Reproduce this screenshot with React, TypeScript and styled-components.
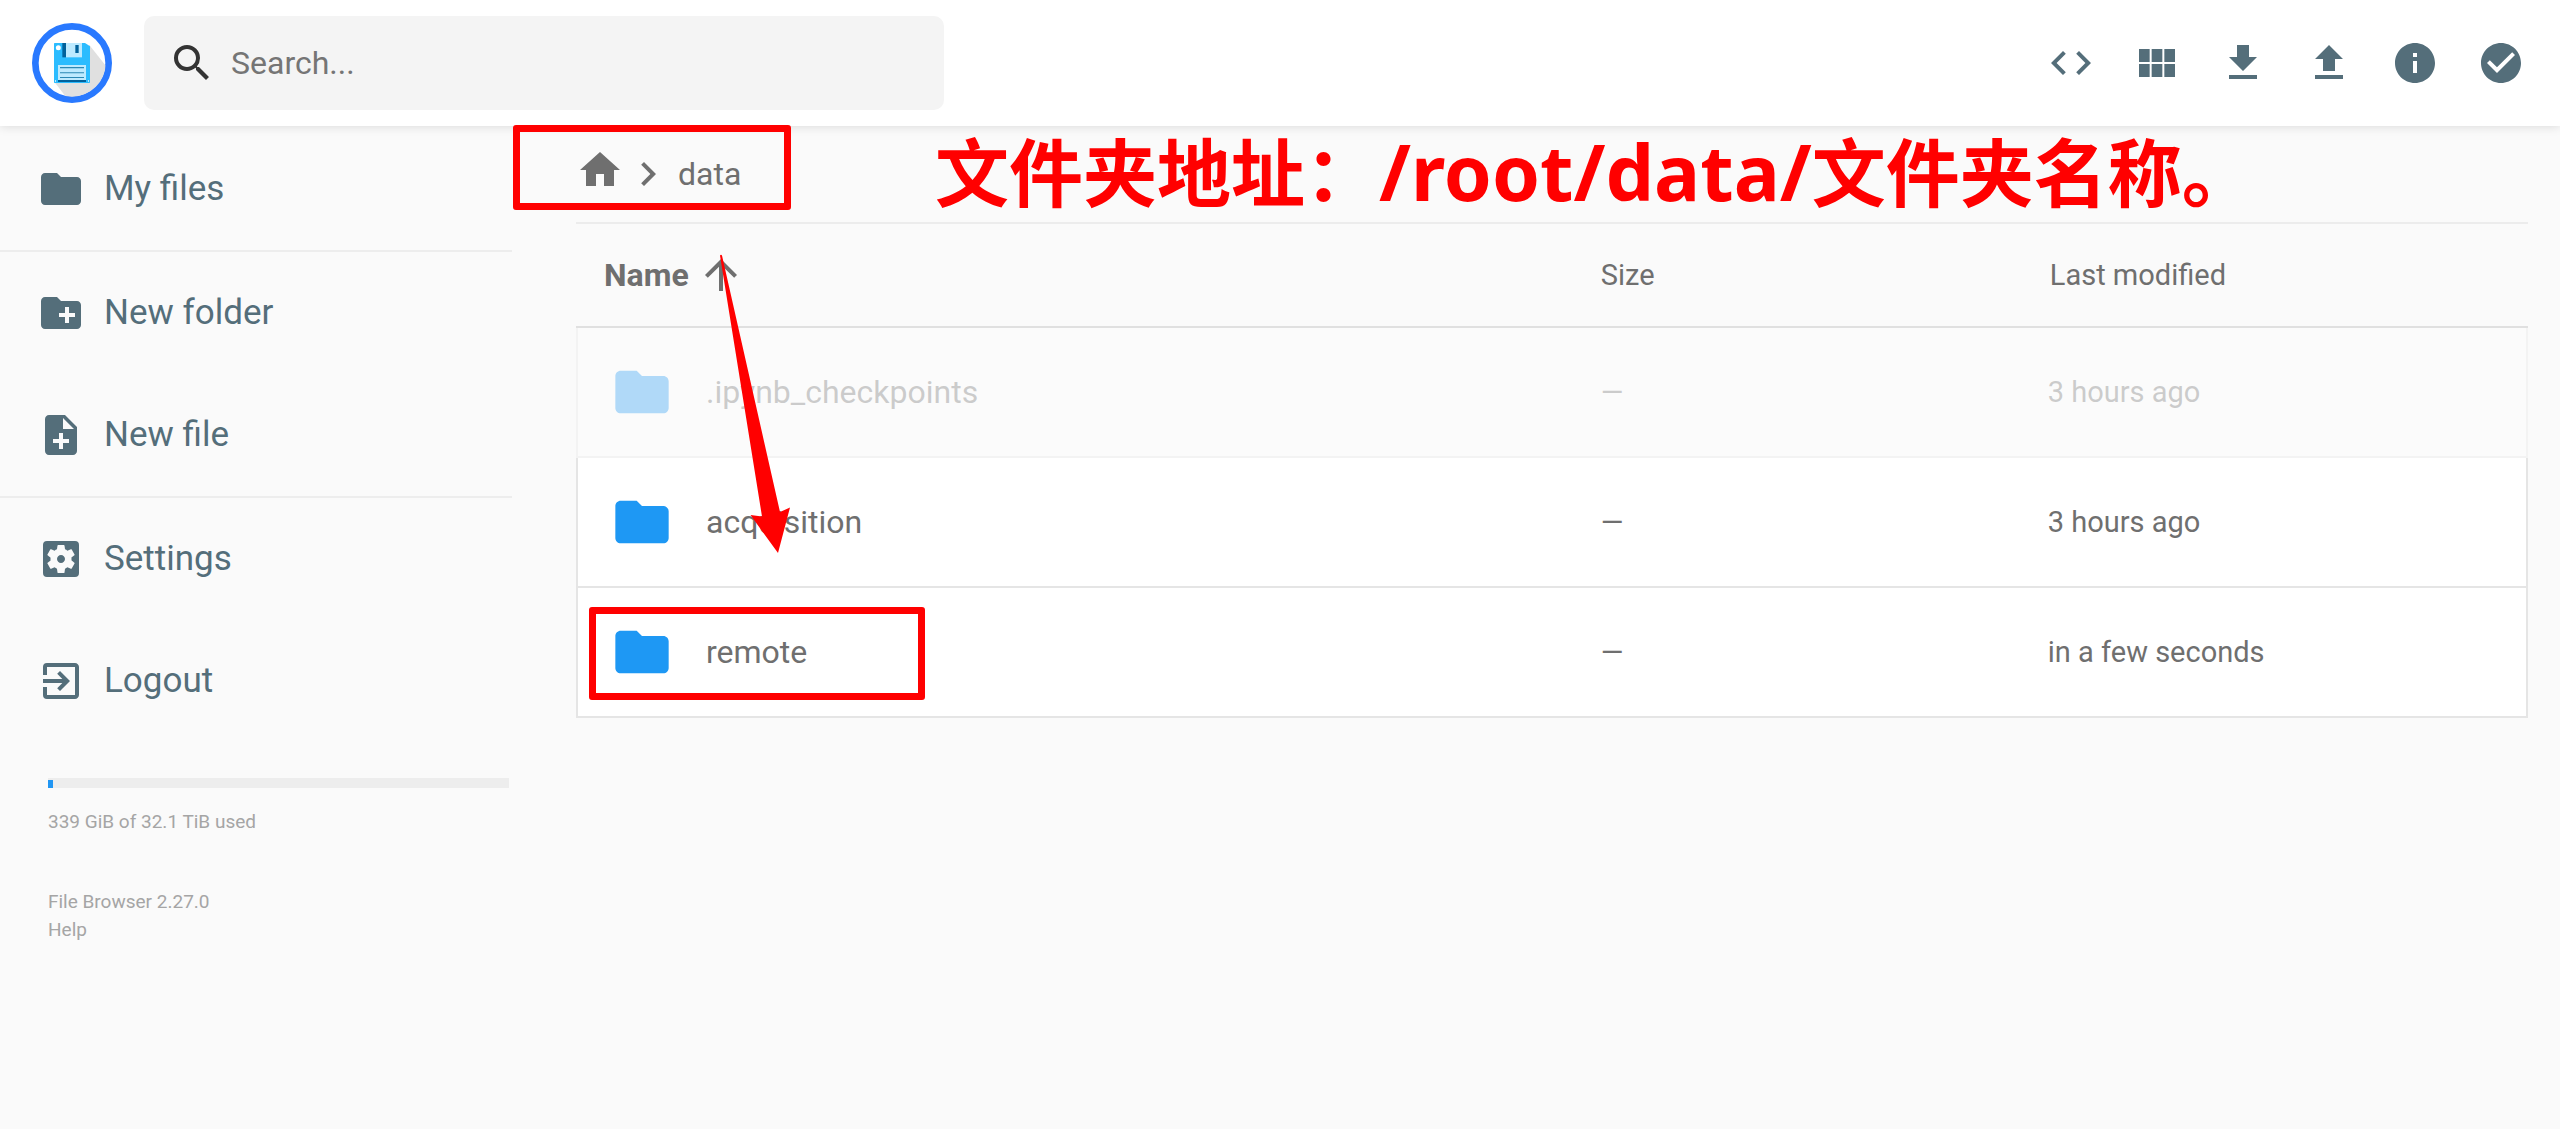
import React from "react";
import styled, { createGlobalStyle } from "styled-components";
import type { IconType } from "react-icons";
import {
  MdArrowUpward,
  MdCheckCircle,
  MdChevronRight,
  MdCode,
  MdCreateNewFolder,
  MdExitToApp,
  MdFileDownload,
  MdFileUpload,
  MdFolder,
  MdHome,
  MdInfo,
  MdNoteAdd,
  MdSearch,
  MdSettingsApplications,
  MdViewModule,
} from "react-icons/md";

const slate = "#546e7a";
const gray = "#6f6f6f";
const red = "#ff0000";

const GlobalStyle = createGlobalStyle`
  * { box-sizing: border-box; }
  body {
    margin: 0;
    background: #fafafa;
    color: ${gray};
    font: 32px/38px Roboto, "Liberation Sans", sans-serif;
  }
  button, input { font: inherit; color: inherit; }
  button { margin: 0; padding: 0; border: 0; background: none; cursor: pointer; }
  a { color: inherit; text-decoration: none; }
`;

const Header = styled.header`
  position: relative;
  display: flex;
  align-items: center;
  padding: 16px;
  background: #fff;
  box-shadow: 0 0 10px rgba(0, 0, 0, 0.15);
`;

const LogoLink = styled.a`
  display: flex;
  margin: 0 32px 0 16px;
  svg { width: 80px; height: 80px; }
`;

const SearchBox = styled.label`
  display: flex;
  align-items: center;
  gap: 15px;
  width: 800px;
  height: 94px;
  padding: 0 24px;
  border-radius: 10px;
  background: #f4f4f4;
  color: #333;
`;

const SearchInput = styled.input`
  flex: 1;
  min-width: 0;
  padding: 0;
  border: 0;
  outline: 0;
  background: none;
  &::placeholder { color: #757575; opacity: 1; }
`;

const Toolbar = styled.div`
  display: flex;
  margin-left: auto;
  color: ${slate};
`;

const ToolButton = styled.button`
  display: flex;
  padding: 19px;
`;

const Layout = styled.div`
  display: flex;
  align-items: flex-start;
`;

const Sidebar = styled.nav`
  flex: none;
  width: 20%;
  padding-top: 2px;
`;

const NavGroup = styled.div`
  & + & { border-top: 2px solid #ededed; }
`;

const NavButton = styled.button`
  display: flex;
  align-items: center;
  gap: 19px;
  width: 100%;
  height: 122px;
  padding: 0 37px;
  color: ${slate};
  font-size: 35px;
  line-height: 42px;
`;

const Credits = styled.div`
  margin: 36px 3px 0 48px;
  color: #a5a5a5;
  font-size: 19px;
  line-height: 28px;
`;

const Meter = styled.div`
  height: 10px;
  margin-bottom: 20px;
  padding-top: 2px;
  background: #ededed;
`;

const MeterFill = styled.div`
  height: 8px;
  background: #2196f3;
`;

const Version = styled.div`
  display: flex;
  flex-direction: column;
  align-items: flex-start;
  margin-top: 52px;
`;

const Main = styled.main`
  position: relative;
  flex: 1;
  min-width: 0;
  padding: 0 32px 0 64px;
`;

const Breadcrumbs = styled.div`
  display: flex;
  align-items: center;
  height: 98px;
  border-bottom: 2px solid #ececec;
`;

const HomeLink = styled.a`
  display: flex;
  padding-bottom: 8px;
`;

const Crumb = styled.a`
  margin-left: 6px;
`;

const Listing = styled.table`
  width: 100%;
  table-layout: fixed;
  border-spacing: 0;
`;

const HeadCell = styled.th<{ $width: string }>`
  width: ${(p) => p.$width};
  height: 104px;
  padding: 0;
  border-bottom: 2px solid #e0e0e0;
  text-align: left;
  font-size: 29px;
  font-weight: 400;
  &:first-child { padding-left: 28px; }
  &:last-child { padding-left: 2px; }
`;

const SortButton = styled.button`
  display: flex;
  align-items: center;
  gap: 8px;
  font-size: 32px;
  font-weight: 700;
`;

const Row = styled.tr<{ $hidden?: boolean }>`
  background: #fff;
  opacity: ${(p) => (p.$hidden ? 0.33 : 1)};
`;

const Cell = styled.td`
  height: 130px;
  padding: 0;
  border: 0 solid #e5e5e5;
  border-bottom-width: 2px;
  font-size: 29px;
  &:first-child { border-left-width: 2px; padding-left: 32px; }
  &:last-child { border-right-width: 2px; }
`;

const FileLink = styled.a`
  display: flex;
  align-items: center;
  gap: 32px;
  font-size: 32px;
  svg { color: #1e98f4; }
`;

const Frame = styled.div<{ $left: number; $top: number; $width: number; $height: number }>`
  position: absolute;
  left: ${(p) => p.$left}px;
  top: ${(p) => p.$top}px;
  width: ${(p) => p.$width}px;
  height: ${(p) => p.$height}px;
  border: 7px solid ${red};
  border-radius: 3px;
  pointer-events: none;
`;

const Pointer = styled.svg`
  position: absolute;
  left: 208px;
  top: 128px;
  pointer-events: none;
`;

const Caption = styled.p`
  position: absolute;
  left: 423px;
  top: -2px;
  margin: 0;
  color: ${red};
  font: 700 74px/90px "Noto Sans CJK SC", sans-serif;
  white-space: nowrap;
  pointer-events: none;
`;

const CaptionPath = styled.span`
  font-family: "Noto Sans", sans-serif;
  font-size: 77px;
`;

const Logo = () => (
  <svg viewBox="0 0 240 240" aria-hidden="true">
    <defs>
      <clipPath id="disc">
        <circle cx="120" cy="120" r="101" />
      </clipPath>
    </defs>
    <circle cx="120" cy="120" r="110" fill="#fff" stroke="#2979ff" strokeWidth="20" />
    <path d="M172 66l60 76-40 98H116L68 178z" fill="#e0e0e0" clipPath="url(#disc)" />
    <path d="M68 60h91l15 10v108q0 2-2 2H68q-2 0-2-2V62q0-2 2-2z" fill="#2bbcff" />
    <circle cx="79" cy="74" r="7.500" fill="#fff" />
    <path d="M91 60h11v43H91z" fill="#01619b" />
    <path d="M102 60h48v43h-48z" fill="#bdeaff" />
    <path d="M130 66h10v24h-10z" fill="#01619b" />
    <path d="M78 126h84v46H78z" fill="#bdeaff" />
    <path d="M84 132h72v4H84zM84 148h72v3H84zM84 162h72v3H84z" fill="#2b88b5" />
    <path d="M78 171h84v6H78z" fill="#01619b" />
    <path d="M69 171h3v6h-3zM168 171h3v6h-3z" fill="#bdeaff" />
  </svg>
);

const tools: [string, IconType][] = [
  ["Toggle shell", MdCode],
  ["Switch view", MdViewModule],
  ["Download", MdFileDownload],
  ["Upload", MdFileUpload],
  ["Info", MdInfo],
  ["Select multiple", MdCheckCircle],
];

const navigation: [string, IconType][][] = [
  [["My files", MdFolder]],
  [["New folder", MdCreateNewFolder], ["New file", MdNoteAdd]],
  [["Settings", MdSettingsApplications], ["Logout", MdExitToApp]],
];

const files = [
  { name: ".ipynb_checkpoints", modified: "3 hours ago", hidden: true },
  { name: "acquisition", modified: "3 hours ago" },
  { name: "remote", modified: "in a few seconds" },
];

const usedPercent = Math.round((339 / (32.1 * 1024)) * 100);

export default function App() {
  return (
    <>
      <GlobalStyle />
      <Header>
        <LogoLink href="#" aria-label="File Browser">
          <Logo />
        </LogoLink>
        <SearchBox>
          <MdSearch size={48} aria-hidden="true" />
          <SearchInput type="text" aria-label="Search" placeholder="Search..." />
        </SearchBox>
        <Toolbar>
          {tools.map(([label, Icon]) => (
            <ToolButton key={label} aria-label={label}>
              <Icon size={48} />
            </ToolButton>
          ))}
        </Toolbar>
      </Header>
      <Layout>
        <Sidebar>
          {navigation.map((group, i) => (
            <NavGroup key={i}>
              {group.map(([label, Icon]) => (
                <NavButton key={label}>
                  <Icon size={48} />
                  <span>{label}</span>
                </NavButton>
              ))}
            </NavGroup>
          ))}
          <Credits>
            <Meter>
              <MeterFill style={{ width: `${usedPercent}%` }} />
            </Meter>
            339 GiB of 32.1 TiB used
            <Version>
              <a href="#">File Browser 2.27.0</a>
              <a href="#">Help</a>
            </Version>
          </Credits>
        </Sidebar>
        <Main>
          <Breadcrumbs>
            <HomeLink href="#" aria-label="Home">
              <MdHome size={48} />
            </HomeLink>
            <MdChevronRight size={48} aria-hidden="true" />
            <Crumb href="#">data</Crumb>
          </Breadcrumbs>
          <Listing>
            <thead>
              <tr>
                <HeadCell $width="52.5%">
                  <SortButton>
                    Name
                    <MdArrowUpward size={48} />
                  </SortButton>
                </HeadCell>
                <HeadCell $width="22.9%">Size</HeadCell>
                <HeadCell $width="24.6%">Last modified</HeadCell>
              </tr>
            </thead>
            <tbody>
              {files.map((file) => (
                <Row key={file.name} $hidden={file.hidden}>
                  <Cell>
                    <FileLink href="#">
                      <MdFolder size={64} />
                      {file.name}
                    </FileLink>
                  </Cell>
                  <Cell>—</Cell>
                  <Cell>{file.modified}</Cell>
                </Row>
              ))}
            </tbody>
          </Listing>
          <Frame $left={1} $top={-1} $width={278} $height={85} />
          <Frame $left={77} $top={481} $width={336} $height={93} />
          <Pointer width="72" height="300" viewBox="0 0 72 300" aria-hidden="true">
            <path d="M0 1.500Q1 0 2 1.500L60 258l10-4.500L58 299 30.500 261l11.500 1.500z" fill={red} />
          </Pointer>
          <Caption>
            文件夹地址：<CaptionPath>/root/data/</CaptionPath>文件夹名称。
          </Caption>
        </Main>
      </Layout>
    </>
  );
}
